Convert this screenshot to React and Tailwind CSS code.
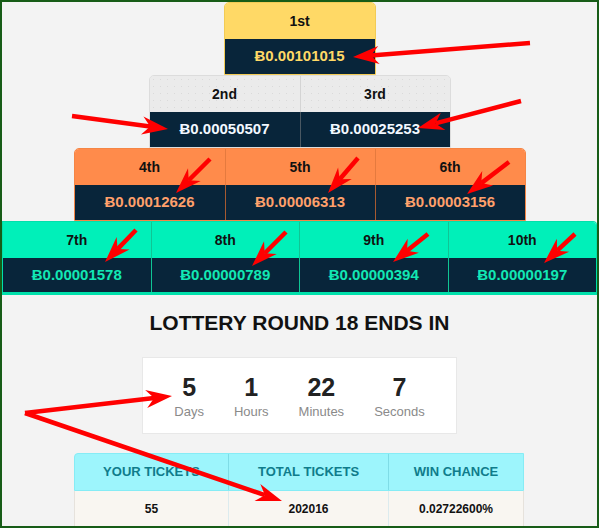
const TIERS = [
  {
    cells: [["1st", "Ƀ0.00101015"]],
    wrap: "border border-[#f2cb55]",
    head: "bg-[#ffd966]",
    headDiv: "border-[#f2cb55]",
    val: "text-[#ffd966]",
    valDiv: "border-[#2d3a3f]",
  },
  {
    cells: [
      ["2nd", "Ƀ0.00050507"],
      ["3rd", "Ƀ0.00025253"],
    ],
    wrap: "border border-[#dcdcdc]",
    head: "bg-[#ebebeb] bg-[radial-gradient(#dadada_0.8px,transparent_0.8px)] bg-[size:7px_7px]",
    headDiv: "border-[#d4d4d4]",
    val: "text-[#f2f8ff]",
    valDiv: "border-[#4a5862]",
  },
  {
    cells: [
      ["4th", "Ƀ0.00012626"],
      ["5th", "Ƀ0.00006313"],
      ["6th", "Ƀ0.00003156"],
    ],
    wrap: "border border-[#f58545]",
    head: "bg-[#ff8b4b]",
    headDiv: "border-[#e57a3e]",
    val: "text-[#ffa06b]",
    valDiv: "border-[#a65a31]",
  },
];

const LAST = [
  ["7th", "Ƀ0.00001578"],
  ["8th", "Ƀ0.00000789"],
  ["9th", "Ƀ0.00000394"],
  ["10th", "Ƀ0.00000197"],
];

const ARROWS = [
  [530, 43, 353, 57],
  [72, 116, 168, 129],
  [521, 101, 418, 128],
  [210, 159, 176, 193],
  [358, 158, 328, 193],
  [509, 162, 467, 194],
  [136, 230, 105, 262],
  [286, 232, 252, 266],
  [428, 234, 393, 262],
  [575, 234, 544, 263],
  [25, 413, 172, 396],
  [25, 413, 282, 501],
];

function Arrow({ a }) {
  const [x1, y1, x2, y2] = a;
  const d = Math.hypot(x2 - x1, y2 - y1);
  const ux = (x2 - x1) / d;
  const uy = (y2 - y1) / d;
  const L = 26;
  const W = 9;
  const N = 18;
  const bx = x2 - ux * L;
  const by = y2 - uy * L;
  const nx = x2 - ux * N;
  const ny = y2 - uy * N;
  const pts = [
    [x2, y2],
    [bx - uy * W, by + ux * W],
    [nx, ny],
    [bx + uy * W, by - ux * W],
  ]
    .map((p) => p.join(","))
    .join(" ");
  return (
    <g>
      <line x1={x1} y1={y1} x2={nx} y2={ny} stroke="#ff0000" strokeWidth="4.5" />
      <polygon points={pts} fill="#ff0000" />
    </g>
  );
}

function Tier({ t }) {
  return (
    <div className={`flex rounded-t-[5px] overflow-hidden ${t.wrap}`}>
      {t.cells.map(([label, value], i) => (
        <div key={label} className={`w-[150px] ${i > 0 ? "border-l" : ""} ${t.headDiv}`}>
          <div className={`h-[36px] flex items-center justify-center text-[14px] font-bold text-[#111] ${t.head}`}>
            {label}
          </div>
          <div
            className={`h-[35px] flex items-center justify-center bg-[#08253a] text-[15px] font-bold ${t.val} ${
              i > 0 ? `border-l -ml-px ${t.valDiv}` : ""
            }`}
          >
            {value}
          </div>
        </div>
      ))}
    </div>
  );
}

export default function App() {
  return (
    <div className="relative w-[599px] h-[528px] overflow-hidden font-['Liberation_Sans',Arial,sans-serif]">
      <div className="w-full h-full border-2 border-[#175c17] bg-[#f3f3f3] overflow-hidden">
        <div className="flex flex-col items-center">
          {TIERS.map((t, i) => (
            <Tier key={i} t={t} />
          ))}
        </div>

        <div className="flex border border-[#00e0ab] border-b-[3px] rounded-tr-[4px] overflow-hidden">
          {LAST.map(([label, value], i) => (
            <div key={label} className={`flex-1 ${i > 0 ? "border-l border-[#0fc594]" : ""}`}>
              <div className="h-[36px] flex items-center justify-center bg-[#00f0b9] text-[14px] font-bold text-[#111]">
                {label}
              </div>
              <div className="h-[34px] flex items-center justify-center bg-[#08253a] text-[15px] font-bold text-[#12e8b4]">
                {value}
              </div>
            </div>
          ))}
        </div>

        <h1 className="mt-[16px] h-[24px] leading-[24px] text-center text-[21px] font-bold text-[#111]">
          LOTTERY ROUND 18 ENDS IN
        </h1>

        <div className="mt-[22px] mx-auto w-[315px] bg-white border border-[#e8e8e8] pt-[15px] pb-[12px] flex justify-center gap-[30px]">
          {[
            ["5", "Days"],
            ["1", "Hours"],
            ["22", "Minutes"],
            ["7", "Seconds"],
          ].map(([n, l]) => (
            <div key={l} className="flex flex-col items-center">
              <div className="text-[25px] leading-[28px] font-bold text-[#222]">{n}</div>
              <div className="mt-[2px] text-[13px] leading-[18px] text-[#8a8a8a]">{l}</div>
            </div>
          ))}
        </div>

        <div className="mt-[19px] ml-[72px] w-[450px]">
          <div className="flex h-[38px] bg-[#9df5fc] border border-[#86ecf5] rounded-tl-[4px] text-[13px] font-bold text-[#0f7c8b]">
            <div className="w-[153px] flex items-center justify-center">YOUR TICKETS</div>
            <div className="w-[160px] flex items-center justify-center border-l border-[#7fdce6]">TOTAL TICKETS</div>
            <div className="flex-1 flex items-center justify-center border-l border-[#7fdce6]">WIN CHANCE</div>
          </div>
          <div className="flex h-[36px] bg-[#f9f6f1] border-x border-[#e6e2dc] text-[12px] font-bold text-[#111]">
            <div className="w-[153px] flex items-center justify-center">55</div>
            <div className="w-[160px] flex items-center justify-center border-l border-[#dcebee]">202016</div>
            <div className="flex-1 flex items-center justify-center border-l border-[#dcebee]">0.02722600%</div>
          </div>
        </div>
      </div>

      <svg className="absolute inset-0 pointer-events-none" width="599" height="528" viewBox="0 0 599 528">
        {ARROWS.map((a, i) => (
          <Arrow key={i} a={a} />
        ))}
      </svg>
    </div>
  );
}
